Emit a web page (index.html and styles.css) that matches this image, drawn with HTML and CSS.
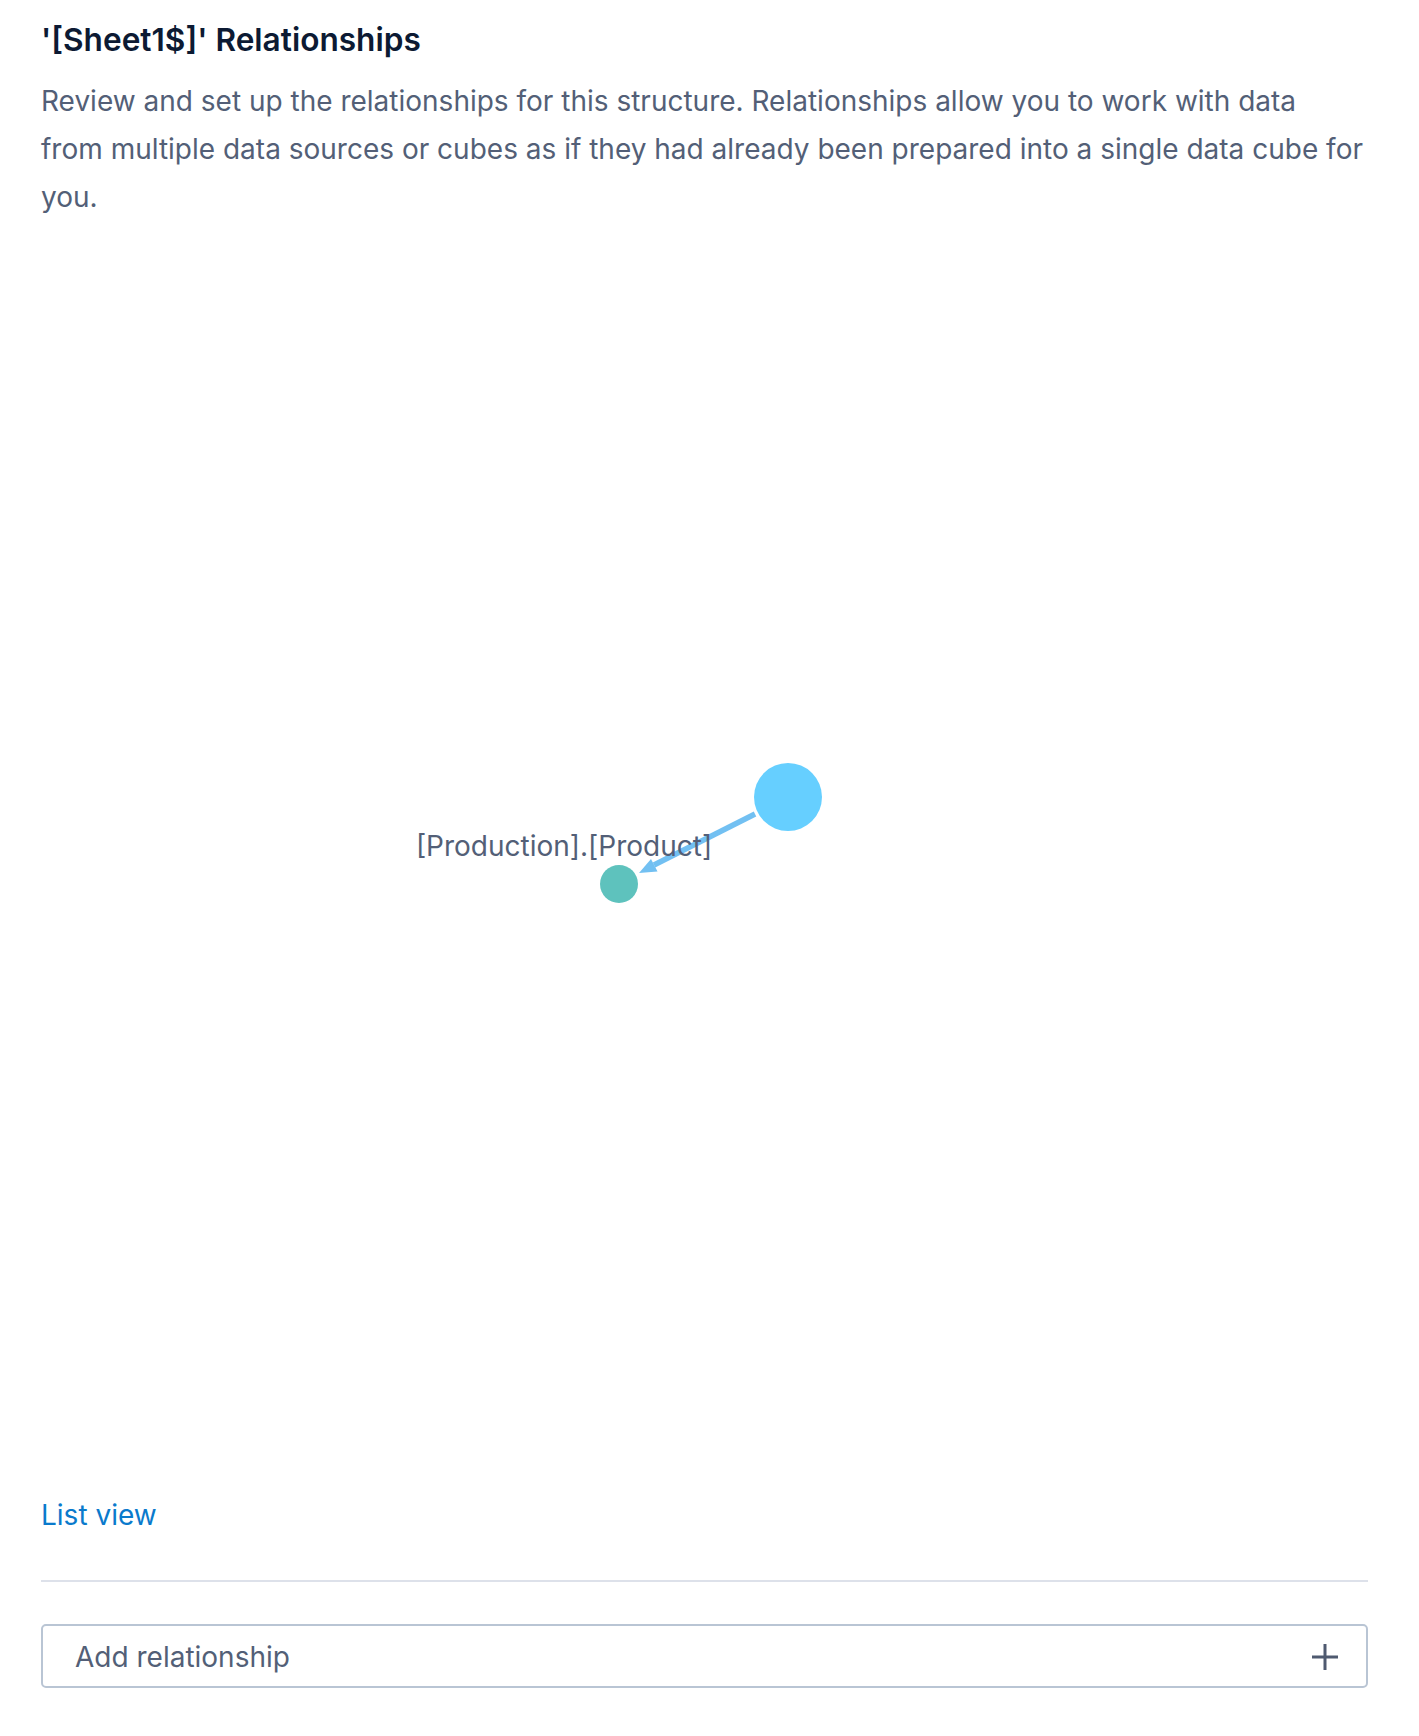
FILE: index.html
```html
<!DOCTYPE html>
<html lang="en">
<head>
  <meta charset="UTF-8">
  <meta name="viewport" content="width=device-width, initial-scale=1.0">
  <title>Relationships</title>
  <link rel="stylesheet" href="styles.css">
</head>
<body>
  <div class="panel">
    <h2 class="panel-title">'[Sheet1$]' Relationships</h2>
    <p class="panel-desc">Review and set up the relationships for this structure. Relationships allow you to work with data from multiple data sources or cubes as if they had already been prepared into a single data cube for you.</p>

    <div class="graph">
      <svg class="graph-svg" width="1327" height="1276" viewBox="0 0 1327 1276">
        <!-- edge between the structure node and the linked table -->
        <line x1="714" y1="593" x2="613" y2="644" stroke="#72c0f2" stroke-width="5.5"></line>
        <polygon points="598,652 616.5,650.5 610,638" fill="#72c0f2"></polygon>
        <circle cx="747" cy="576" r="34" fill="#66cfff"></circle>
        <circle cx="578" cy="663" r="19" fill="#5ec2bd"></circle>
        <text class="node-label" x="523" y="635" text-anchor="middle">[Production].[Product]</text>
      </svg>
    </div>

    <a class="list-link" href="#">List view</a>

    <hr class="divider">

    <button class="add-btn" type="button">
      <span>Add relationship</span>
      <svg class="add-icon" width="28" height="28" viewBox="0 0 28 28">
        <path d="M14 1 V27 M1 14 H27" stroke="#4f5a70" stroke-width="3" fill="none"></path>
      </svg>
    </button>
  </div>
</body>
</html>
```

FILE: styles.css
```css
body {
  margin: 0;
  font-family: Inter, "Noto Sans", sans-serif;
  background-color: #fff;
  color: #4f5b73;
}
.panel {
  padding: 21px 51px 40px 41px;
}
.panel-title {
  margin: 0;
  font-size: 31.6px;
  line-height: 38px;
  font-weight: 600;
  color: #0c1a33;
}
.panel-desc {
  margin: 18px 4px 0 0;
  font-size: 28px;
  line-height: 48px;
  color: #535f77;
}
.graph {
  height: 1276px;
}
.graph-svg {
  display: block;
}
.node-label {
  font-family: Inter, "Noto Sans", sans-serif;
  font-size: 28px;
  fill: #535f77;
}
.list-link {
  display: inline-block;
  font-size: 28px;
  line-height: 36px;
  color: #0a7acc;
  text-decoration: none;
}
.divider {
  margin: 47px 0 0;
  border: none;
  border-top: 2px solid #dde1ea;
}
.add-btn {
  margin-top: 42px;
  width: 100%;
  height: 64px;
  display: flex;
  align-items: center;
  justify-content: space-between;
  padding: 2px 27px 0 32px;
  border: 2px solid #b9c5d4;
  border-radius: 5px;
  background: #fff;
  font-family: Inter, "Noto Sans", sans-serif;
  font-size: 28px;
  color: #535f77;
  cursor: pointer;
}
.add-icon {
  display: block;
}
```
